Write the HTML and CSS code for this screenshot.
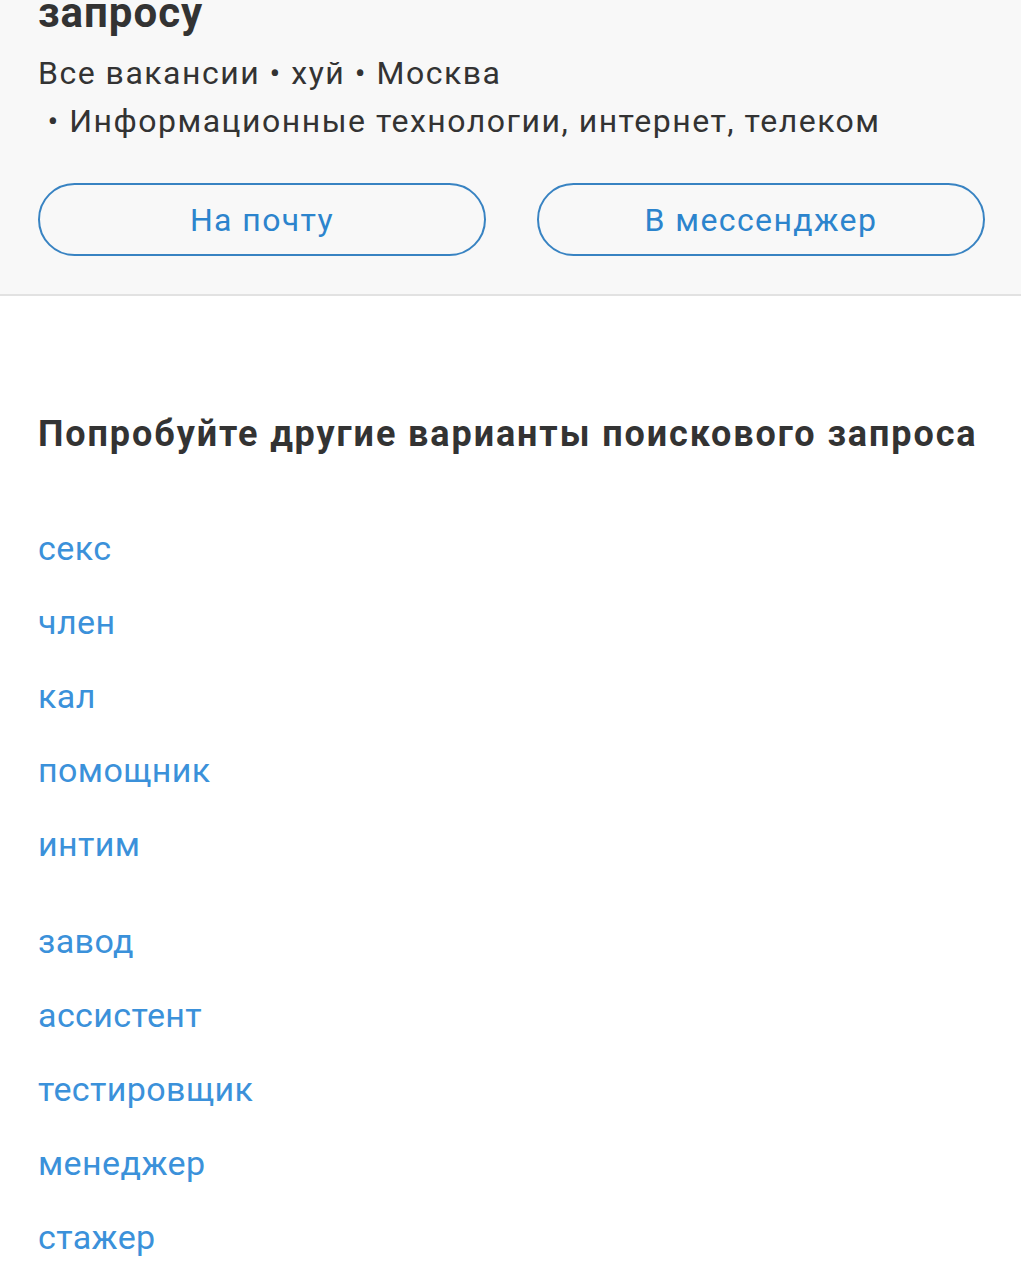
FILE: index.html
```html
<!DOCTYPE html>
<html lang="ru">
<head>
    <meta charset="UTF-8">
    <meta name="viewport" content="width=device-width, initial-scale=1.0">
    <title>Поиск вакансий</title>
    <link rel="stylesheet" href="styles.css">
</head>
<body>

    <section class="subscribe">
        <h1 class="subscribe-title">запросу</h1>
        <p class="subscribe-query">
            Все вакансии • хуй • Москва<br>
            &nbsp;• Информационные технологии, интернет, телеком
        </p>
        <div class="subscribe-buttons">
            <button class="outline-btn">На почту</button>
            <button class="outline-btn">В мессенджер</button>
        </div>
    </section>

    <main class="suggest">
        <h2 class="suggest-title">Попробуйте другие варианты поискового запроса</h2>

        <ul class="suggest-list">
            <li><a href="#">секс</a></li>
            <li><a href="#">член</a></li>
            <li><a href="#">кал</a></li>
            <li><a href="#">помощник</a></li>
            <li><a href="#">интим</a></li>
        </ul>

        <ul class="suggest-list">
            <li><a href="#">завод</a></li>
            <li><a href="#">ассистент</a></li>
            <li><a href="#">тестировщик</a></li>
            <li><a href="#">менеджер</a></li>
            <li><a href="#">стажер</a></li>
        </ul>
    </main>

</body>
</html>
```

FILE: styles.css
```css
body {
    font-family: Roboto, "Noto Sans", Arial, sans-serif;
    margin: 0;
    padding: 0;
    background-color: #fff;
    color: #333;
    overflow: hidden;
}

.subscribe {
    background-color: #f8f8f8;
    padding: 0 36px 38px 38px;
    border-bottom: 2px solid #e2e2e2;
}

.subscribe-title {
    font-size: 42px;
    line-height: 48px;
    font-weight: bold;
    letter-spacing: 1px;
    margin: -11px 0 0;
    color: #333;
}

.subscribe-query {
    font-size: 32px;
    line-height: 48px;
    letter-spacing: 1.5px;
    margin: 12px 0 38px;
    color: #333;
}

.subscribe-buttons {
    display: grid;
    grid-template-columns: 1fr 1fr;
    gap: 51px;
}

.outline-btn {
    height: 73px;
    font-family: inherit;
    font-size: 32px;
    letter-spacing: 1.4px;
    color: #2c84cd;
    background: transparent;
    border: 2px solid #3883c2;
    border-radius: 37px;
    cursor: pointer;
}

.suggest {
    padding: 116px 38px 0;
}

.suggest-title {
    font-size: 36px;
    line-height: 44px;
    font-weight: bold;
    letter-spacing: 1.9px;
    margin: 0 0 55px;
    color: #333;
}

.suggest-list {
    list-style: none;
    margin: 0 0 23px;
    padding: 0;
}

.suggest-list li {
    font-size: 34px;
    line-height: 74px;
    letter-spacing: 0.4px;
}

.suggest-list a {
    color: #3b91da;
    text-decoration: none;
}
```
